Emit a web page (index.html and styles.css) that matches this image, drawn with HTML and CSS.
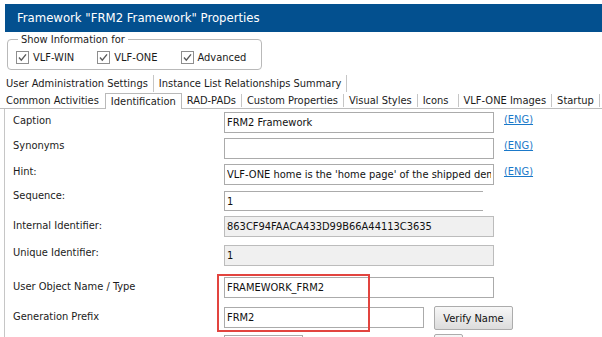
FILE: index.html
```html
<!DOCTYPE html>
<html>
<head>
    <meta charset="utf-8">
    <title>Framework Properties</title>
    <link rel="stylesheet" href="styles.css">
</head>
<body>

    <div class="titlebar">Framework "FRM2 Framework" Properties</div>

    <fieldset class="show-info">
        <legend>Show Information for</legend>
        <div class="checks">
            <label class="check"><span class="box"><svg width="13" height="13" viewBox="0 0 13 13"><rect x="0.5" y="0.5" width="12" height="12" fill="#fff" stroke="#8e8e8e"/><path d="M3 6.5 L5.3 9.2 L10 3.4" fill="none" stroke="#5a5a5a" stroke-width="1.4"/></svg></span>VLF-WIN</label>
            <label class="check"><span class="box"><svg width="13" height="13" viewBox="0 0 13 13"><rect x="0.5" y="0.5" width="12" height="12" fill="#fff" stroke="#8e8e8e"/><path d="M3 6.5 L5.3 9.2 L10 3.4" fill="none" stroke="#5a5a5a" stroke-width="1.4"/></svg></span>VLF-ONE</label>
            <label class="check"><span class="box"><svg width="13" height="13" viewBox="0 0 13 13"><rect x="0.5" y="0.5" width="12" height="12" fill="#fff" stroke="#8e8e8e"/><path d="M3 6.5 L5.3 9.2 L10 3.4" fill="none" stroke="#5a5a5a" stroke-width="1.4"/></svg></span>Advanced</label>
        </div>
    </fieldset>

    <div class="tabs">
        <div class="tab-row top-row">
            <a class="tab">User Administration Settings</a>
            <a class="tab">Instance List Relationships Summary</a>
        </div>
        <div class="tab-row bottom-row">
            <a class="tab no-sep">Common Activities</a>
            <a class="tab active">Identification</a>
            <a class="tab">RAD-PADs</a>
            <a class="tab">Custom Properties</a>
            <a class="tab">Visual Styles</a>
            <a class="tab wide">Icons</a>
            <a class="tab">VLF-ONE Images</a>
            <a class="tab">Startup</a>
        </div>
    </div>

    <div class="panel">
        <div class="row r-caption">
            <span class="lbl">Caption</span>
            <input class="field" type="text" value="FRM2 Framework" readonly>
            <a class="eng">(ENG)</a>
        </div>
        <div class="row r-synonyms">
            <span class="lbl lbl-up1">Synonyms</span>
            <input class="field" type="text" value="" readonly>
            <a class="eng">(ENG)</a>
        </div>
        <div class="row r-hint">
            <span class="lbl lbl-up1">Hint:</span>
            <input class="field" type="text" value="VLF-ONE home is the 'home page' of the shipped demonstration" readonly>
            <a class="eng">(ENG)</a>
        </div>
        <div class="row r-sequence">
            <span class="lbl lbl-up">Sequence:</span>
            <input class="field spin" type="text" value="1" readonly>
        </div>
        <div class="row r-internal">
            <span class="lbl lbl-down">Internal Identifier:</span>
            <input class="field grey" type="text" value="863CF94FAACA433D99B66A44113C3635" readonly>
        </div>
        <div class="row r-unique">
            <span class="lbl lbl-up1">Unique Identifier:</span>
            <input class="field grey" type="text" value="1" readonly>
        </div>
        <div class="row r-object">
            <span class="lbl lbl-mid">User Object Name / Type</span>
            <input class="field" type="text" value="FRAMEWORK_FRM2" readonly>
        </div>
        <div class="row r-prefix">
            <span class="lbl lbl-mid">Generation Prefix</span>
            <input class="field short" type="text" value="FRM2" readonly>
            <button class="btn">Verify Name</button>
        </div>
        <div class="row r-more">
            <span class="lbl"></span>
            <input class="field tiny" type="text" value="" readonly>
            <button class="btn small"></button>
        </div>
    </div>

    <div class="highlight"></div>

</body>
</html>
```

FILE: styles.css
```css
* {
    margin: 0;
    padding: 0;
    box-sizing: border-box;
}
body {
    width: 602px;
    height: 337px;
    overflow: hidden;
    position: relative;
    background: white;
    color: #1b1b1b;
    font-family: "DejaVu Sans Condensed", "Liberation Sans", sans-serif;
    font-size: 11px;
}
.titlebar {
    margin: 4px 0 0 5px;
    height: 28px;
    line-height: 28px;
    padding-left: 12px;
    background: #03508f;
    color: white;
    font-size: 13px;
}
.show-info {
    margin: 1px 0 0 7px;
    width: 255px;
    border: 1px solid #b9b9b9;
    border-radius: 4px;
    padding: 5px 6px 5px 8px;
}
.show-info legend {
    margin-left: 2px;
    padding: 0 3px;
    line-height: 13px;
}
.checks {
    display: flex;
    gap: 23px;
}
.check {
    display: flex;
    align-items: center;
    gap: 4px;
    height: 13px;
}
.box svg {
    display: block;
}
.tabs {
    margin-top: 4px;
}
.tab-row {
    display: flex;
    padding-left: 6px;
}
.top-row {
    height: 18px;
    align-items: center;
}
.top-row .tab {
    padding: 0 5px;
    border-right: 1px solid #c6c6c6;
    line-height: 17px;
}
.bottom-row {
    height: 17px;
    border-bottom: 1px solid #bdbdbd;
    align-items: stretch;
}
.tab {
    padding: 0 5px;
    white-space: nowrap;
}
.tab-row .tab:first-child {
    padding-left: 0;
}
.bottom-row .tab {
    display: flex;
    align-items: center;
    margin: 2px 0 1px;
    border-right: 1px solid #c6c6c6;
}
.bottom-row .tab.no-sep {
    padding-right: 6px;
    border-right: none;
}
.bottom-row .tab.active {
    margin: 1px 0 -1px;
    padding: 0 5px 1px 5px;
    background: white;
    border: 1px solid #b9b9b9;
    border-bottom: none;
}
.bottom-row .tab.wide {
    padding-right: 9px;
}
.panel {
    margin-left: 4px;
    border-left: 1px solid #c6c6c6;
    padding: 3px 0 0 8px;
    height: 228px;
    overflow: hidden;
}
.row {
    display: flex;
    align-items: flex-start;
}
.r-caption, .r-synonyms {
    height: 26px;
}
.r-hint {
    height: 27px;
}
.r-sequence {
    height: 25px;
}
.r-internal {
    height: 29px;
}
.r-unique {
    height: 32px;
}
.r-object {
    height: 30px;
}
.r-prefix {
    height: 28px;
}
.lbl {
    width: 211px;
    flex: none;
    line-height: 13px;
    padding-top: 2px;
}
.lbl-up1 {
    padding-top: 1px;
}
.lbl-up {
    margin-top: -2px;
    padding-top: 0;
}
.lbl-down {
    padding-top: 3px;
}
.lbl-mid {
    padding-top: 3px;
}
.field {
    width: 270px;
    height: 21px;
    border: 1px solid #ababab;
    padding: 0 2px;
    font-family: inherit;
    font-size: 11px;
    color: #111;
    background: white;
    outline: none;
}
.field.spin {
    width: 259px;
    border-right: none;
    height: 20px;
}
.field.grey {
    background: #f0f0f0;
    border-color: #bcbcbc;
}
.field.short {
    width: 200px;
}
.field.tiny {
    width: 79px;
}
.eng {
    margin: 1px 0 0 10px;
    color: #1b79c9;
    text-decoration: underline;
}
.btn {
    margin: -1px 0 0 10px;
    width: 79px;
    height: 24px;
    border: 1px solid #acacac;
    border-radius: 2px;
    background: linear-gradient(#f7f7f7, #dcdcdc);
    font-family: inherit;
    font-size: 11px;
    color: #111;
}
.btn.small {
    margin-left: 131px;
    width: 29px;
}
.highlight {
    position: absolute;
    left: 217px;
    top: 274px;
    width: 153px;
    height: 58px;
    border: 2px solid #e2443f;
}
```
